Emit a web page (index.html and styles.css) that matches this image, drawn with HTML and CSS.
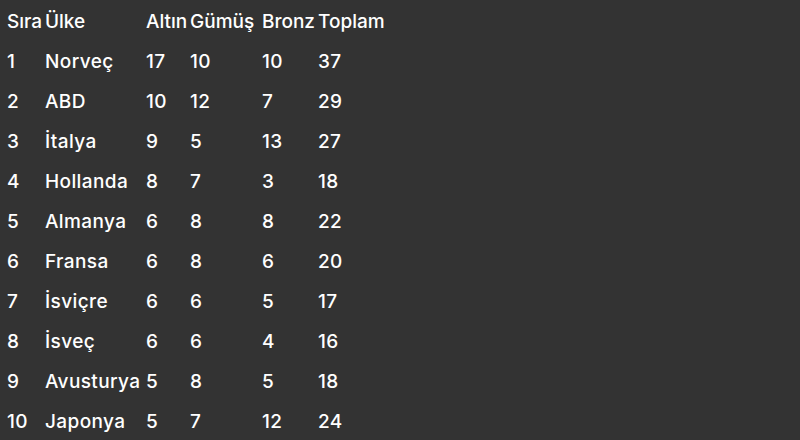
FILE: index.html
```html
<!DOCTYPE html>
<html lang="tr">
<head>
<meta charset="utf-8">
<title>Madalya Tablosu</title>
<link rel="stylesheet" href="styles.css">
</head>
<body>
<table class="medals">
  <colgroup>
    <col class="c-rank">
    <col class="c-country">
    <col class="c-gold">
    <col class="c-silver">
    <col class="c-bronze">
    <col class="c-total">
  </colgroup>
  <thead>
    <tr><th>Sıra</th><th>Ülke</th><th>Altın</th><th>Gümüş</th><th>Bronz</th><th>Toplam</th></tr>
  </thead>
  <tbody>
    <tr><td>1</td><td>Norveç</td><td>17</td><td>10</td><td>10</td><td>37</td></tr>
    <tr><td>2</td><td>ABD</td><td>10</td><td>12</td><td>7</td><td>29</td></tr>
    <tr><td>3</td><td>İtalya</td><td>9</td><td>5</td><td>13</td><td>27</td></tr>
    <tr><td>4</td><td>Hollanda</td><td>8</td><td>7</td><td>3</td><td>18</td></tr>
    <tr><td>5</td><td>Almanya</td><td>6</td><td>8</td><td>8</td><td>22</td></tr>
    <tr><td>6</td><td>Fransa</td><td>6</td><td>8</td><td>6</td><td>20</td></tr>
    <tr><td>7</td><td>İsviçre</td><td>6</td><td>6</td><td>5</td><td>17</td></tr>
    <tr><td>8</td><td>İsveç</td><td>6</td><td>6</td><td>4</td><td>16</td></tr>
    <tr><td>9</td><td>Avusturya</td><td>5</td><td>8</td><td>5</td><td>18</td></tr>
    <tr><td>10</td><td>Japonya</td><td>5</td><td>7</td><td>12</td><td>24</td></tr>
  </tbody>
</table>
</body>
</html>
```

FILE: styles.css
```css
html, body {
  margin: 0;
  padding: 0;
  background: #333333;
  height: 100%;
}
body {
  color: #ffffff;
  font-family: Inter, "Noto Sans", sans-serif;
  font-weight: 500;
  font-size: 19px;
  letter-spacing: 0.4px;
}
.medals {
  border-collapse: collapse;
  table-layout: fixed;
  width: 401px;
  margin: 1px 0 0 7px;
}
.c-rank { width: 38px; }
.c-country { width: 101px; }
.c-gold { width: 44px; }
.c-silver { width: 72px; }
.c-bronze { width: 56px; }
.c-total { width: 90px; }
.medals th, .medals td {
  padding: 0;
  height: 40px;
  text-align: left;
  vertical-align: middle;
  font-weight: 500;
  white-space: nowrap;
  line-height: 1;
}
.medals th {
  letter-spacing: 0;
}
```
